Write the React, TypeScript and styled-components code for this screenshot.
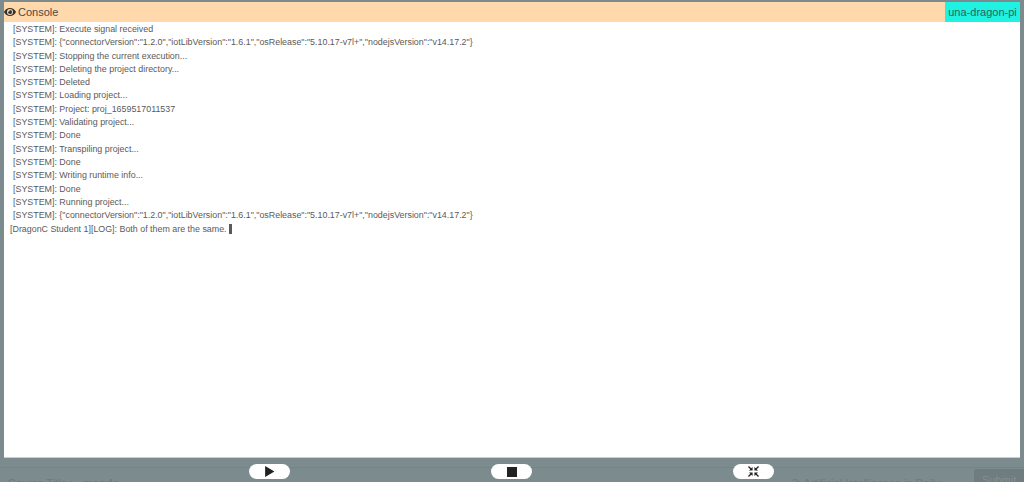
import React from "react";
import styled, { createGlobalStyle } from "styled-components";
import { FaEye } from "react-icons/fa";

const Global = createGlobalStyle`
  html, body { margin: 0; padding: 0; height: 100%; overflow: hidden; }
  body { font-family: "Liberation Sans", Arial, sans-serif; background: #7b8b8e; }
`;
const Page = styled.div`
  width: 1024px; height: 482px; display: flex; flex-direction: column; overflow: hidden; position: relative;
  background: #7b8b8e;
`;
const Panel = styled.section`
  margin: 2px 4px 0; height: 456px; flex: none; display: flex; flex-direction: column; background: #fff;
  border-bottom: 1px solid #c9cfd0; box-sizing: border-box;
`;
const Header = styled.header`
  height: 20px; flex: none; display: flex; align-items: center; justify-content: space-between; background: #ffd9ab;
  color: #4a4a48; font-size: 11px;
`;
const Title = styled.div`display: flex; align-items: center; gap: 2px;`;
const Device = styled.div`
  align-self: stretch; width: 75px; display: flex; align-items: center; justify-content: center;
  background: #1ff2e0; color: #2f5f60; font-size: 11px;
`;
const Log = styled.div`
  flex: 1; padding: 0.95px 0 0 6px; color: #5a5a5a; font-size: 8.9px; line-height: 13.3px;
`;
const SystemRow = styled.div`
  padding-left: 3px; white-space: pre; height: 13.3px;
`;
const UserRow = styled.div`
  margin-top: 0.5px; white-space: pre; height: 13.3px;
`;
const Cursor = styled.span`
  display: inline-block; width: 3px; height: 10px; background: #5a5a5a; margin-left: 2px; vertical-align: -2px;
`;
const Footer = styled.footer`
  flex: 1; position: relative; z-index: 1; display: flex; justify-content: space-between; padding: 6px 0 0 249px; box-sizing: border-box; width: 774px;
`;
const Control = styled.button`
  width: 41px; height: 15px; border: 0; padding: 0; border-radius: 8px; background: #fff; color: #222;
  display: flex; align-items: center; justify-content: center;
`;
const Seam = styled.div`
  position: absolute; left: 0; right: 0; top: 467px; height: 1px; background: #748488;
`;
const BehindLeft = styled.span`
  position: absolute; left: 8px; top: 477px; color: #6b7a7d; font-size: 11px; white-space: pre;
`;
const BehindStrong = styled.b`
  font-weight: 700; margin-left: 10px;
`;
const BehindRight = styled.span`
  position: absolute; left: 792px; top: 477px; color: #6b7a7d; font-size: 11px; white-space: pre;
`;
const Submit = styled.span`
  position: absolute; left: 974px; top: 469px; width: 50px; height: 13px; background: #6f7d80; color: #84908f;
  font-size: 11px; padding: 5px 0 0 8px; box-sizing: border-box; border-radius: 2px 0 0 0;
`;

const info = '{"connectorVersion":"1.2.0","iotLibVersion":"1.6.1","osRelease":"5.10.17-v7l+","nodejsVersion":"v14.17.2"}';
const lines = [
  "Execute signal received", info, "Stopping the current execution...", "Deleting the project directory...",
  "Deleted", "Loading project...", "Project: proj_1659517011537", "Validating project...", "Done",
  "Transpiling project...", "Done", "Writing runtime info...", "Done", "Running project...", info,
];

export default function App() {
  return (
    <Page>
      <Global />
      <Seam />
      <BehindLeft>Course Title :<BehindStrong>mondo</BehindStrong></BehindLeft>
      <BehindRight>3: Artificial Intelligence in Daily ...</BehindRight>
      <Submit>Submit</Submit>
      <Panel>
        <Header>
          <Title>
            <FaEye size={12} color="#333" />
            Console
          </Title>
          <Device>una-dragon-pi</Device>
        </Header>
        <Log>
          {lines.map((l, i) => <SystemRow key={i}>[SYSTEM]: {l}</SystemRow>)}
          <UserRow>[DragonC Student 1][LOG]: Both of them are the same.<Cursor /></UserRow>
        </Log>
      </Panel>
      <Footer>
        <Control aria-label="Run">
          <svg width="11" height="11" viewBox="0 0 10 10"><path d="M1 0l8.500 5L1 10z" fill="#222" /></svg>
        </Control>
        <Control aria-label="Stop">
          <svg width="10" height="10" viewBox="0 0 10 10"><rect width="10" height="10" fill="#222" /></svg>
        </Control>
        <Control aria-label="Collapse">
          <svg width="11" height="11" viewBox="0 0 12 12" fill="#222">
            <path d="M0 1l1-1 2.500 2.500L5 1v4H1l1.500-1.500zM12 1l-1-1-2.500 2.500L7 1v4h4L9.500 3.500zM0 11l1 1 2.500-2.500L5 11V7H1l1.500 1.500zM12 11l-1 1-2.500-2.500L7 11V7h4L9.500 8.500z" />
          </svg>
        </Control>
      </Footer>
    </Page>
  );
}
